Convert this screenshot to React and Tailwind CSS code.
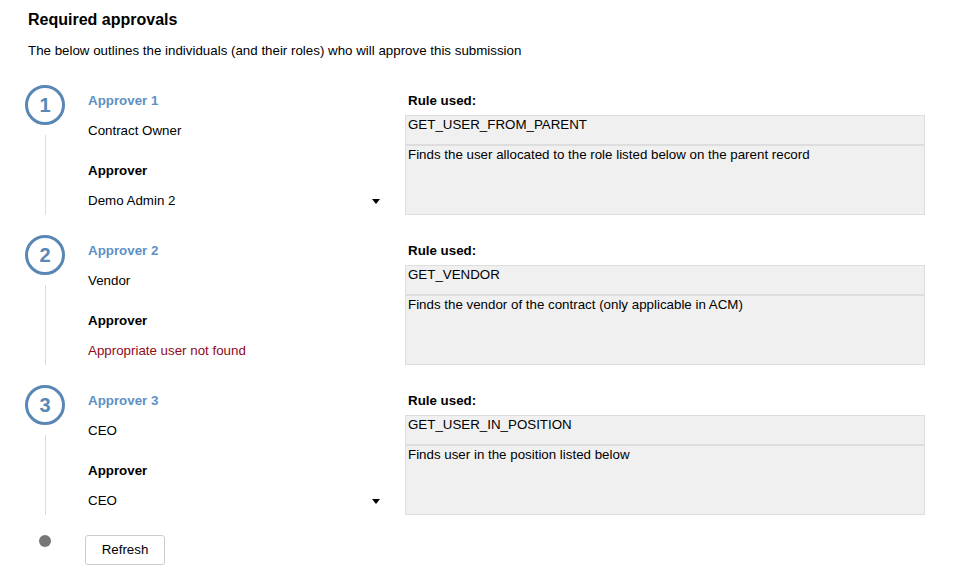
import React from "react";

const approvers = [
  {
    n: 1,
    role: "Contract Owner",
    user: "Demo Admin 2",
    rule: "GET_USER_FROM_PARENT",
    desc: "Finds the user allocated to the role listed below on the parent record",
  },
  {
    n: 2,
    role: "Vendor",
    user: null,
    rule: "GET_VENDOR",
    desc: "Finds the vendor of the contract (only applicable in ACM)",
  },
  {
    n: 3,
    role: "CEO",
    user: "CEO",
    rule: "GET_USER_IN_POSITION",
    desc: "Finds user in the position listed below",
  },
];

const Step = ({ item }) => (
  <div className="flex h-[150px]">
    {/* step marker + connector */}
    <div className="w-[63px] flex flex-col items-center pr-[23px]">
      <div className="w-[40px] h-[40px] rounded-full border-[3px] border-[#5887b6] flex items-center justify-center text-[20px] font-bold text-[#5887b6] leading-none">
        {item.n}
      </div>
      <div className="mt-[10px] h-[80px] w-px bg-[#dddddd]" />
    </div>

    {/* approver details */}
    <div className="w-[300px] text-[13.33px] pt-[1px]">
      <div className="h-[30px] leading-[30px] font-bold text-[#5e90c4]">
        Approver {item.n}
      </div>
      <div className="h-[30px] leading-[30px] text-black">{item.role}</div>
      <div className="mt-[10px] h-[30px] leading-[30px] font-bold text-black">
        Approver
      </div>
      {item.user ? (
        <div className="h-[30px] flex items-center justify-between pr-[8px] text-black">
          <span>{item.user}</span>
          <svg width="8" height="5" viewBox="0 0 8 5">
            <path d="M0 0 H8 L4 5 Z" fill="#000" />
          </svg>
        </div>
      ) : (
        <div className="h-[30px] leading-[30px] text-[#8f0a1a]">
          Appropriate user not found
        </div>
      )}
    </div>

    {/* rule */}
    <div className="ml-[17px] w-[520px] text-[13.33px] text-black">
      <div className="h-[30px] leading-[31px] font-bold pl-[3px]">Rule used:</div>
      <div className="h-[30px] border border-[#dddddd] bg-[#f0f0f0] px-[2px] leading-[17px]">
        {item.rule}
      </div>
      <div className="h-[70px] border border-[#dddddd] bg-[#f0f0f0] px-[2px] leading-[17px]">
        {item.desc}
      </div>
    </div>
  </div>
);

export default function App() {
  return (
    <div
      className="w-[964px] h-[572px] bg-white pl-[25px] text-black overflow-hidden"
      style={{ fontFamily: '"Liberation Sans", Arial, sans-serif' }}
    >
      <h2 className="pl-[3px] pt-[10px] h-[40px] text-[16px] font-bold leading-[19px]">
        Required approvals
      </h2>
      <p className="pl-[3px] pt-[1px] text-[13.33px] leading-[20px] h-[45px]">
        The below outlines the individuals (and their roles) who will approve this submission
      </p>
      {approvers.map((a) => (
        <Step key={a.n} item={a} />
      ))}
      <div className="flex items-start">
        <div className="w-[60px] flex justify-center pr-[20px]">
          <div className="w-[12px] h-[12px] rounded-full bg-[#777777]" />
        </div>
        <button className="w-[80px] h-[30px] border border-[#cccccc] rounded-[3px] bg-white text-[13.33px] text-black">
          Refresh
        </button>
      </div>
    </div>
  );
}
